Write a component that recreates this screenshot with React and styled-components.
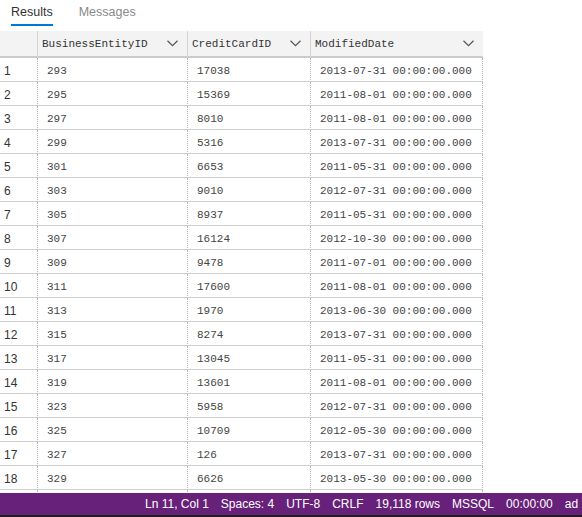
import React from "react"
import styled, { createGlobalStyle } from "styled-components"

const GlobalStyle = createGlobalStyle`
  html, body {
    margin: 0;
    padding: 0;
    background: #ffffff;
  }
`

const rows = [
  [1, 293, 17038, "2013-07-31 00:00:00.000"],
  [2, 295, 15369, "2011-08-01 00:00:00.000"],
  [3, 297, 8010, "2011-08-01 00:00:00.000"],
  [4, 299, 5316, "2013-07-31 00:00:00.000"],
  [5, 301, 6653, "2011-05-31 00:00:00.000"],
  [6, 303, 9010, "2012-07-31 00:00:00.000"],
  [7, 305, 8937, "2011-05-31 00:00:00.000"],
  [8, 307, 16124, "2012-10-30 00:00:00.000"],
  [9, 309, 9478, "2011-07-01 00:00:00.000"],
  [10, 311, 17600, "2011-08-01 00:00:00.000"],
  [11, 313, 1970, "2013-06-30 00:00:00.000"],
  [12, 315, 8274, "2013-07-31 00:00:00.000"],
  [13, 317, 13045, "2011-05-31 00:00:00.000"],
  [14, 319, 13601, "2011-08-01 00:00:00.000"],
  [15, 323, 5958, "2012-07-31 00:00:00.000"],
  [16, 325, 10709, "2012-05-30 00:00:00.000"],
  [17, 327, 126, "2013-07-31 00:00:00.000"],
  [18, 329, 6626, "2013-05-30 00:00:00.000"],
  // the next row only peeks out above the status bar
  ["", "", "", ""],
]

const columns = ["BusinessEntityID", "CreditCardID", "ModifiedDate"]
const statusItems = ["Ln 11, Col 1", "Spaces: 4", "UTF-8", "CRLF", "19,118 rows", "MSSQL", "00:00:00", "ad"]

const Page = styled.div`
  width: 582px;
  height: 517px;
  display: flex;
  flex-direction: column;
  overflow: hidden;
  font-family: "Liberation Sans", Arial, sans-serif;
`

const Tabs = styled.div`
  height: 31px;
  display: flex;
  align-items: flex-start;
  gap: 26px;
  padding-left: 11px;
  flex-shrink: 0;
`

const Tab = styled.div`
  height: 26px;
  box-sizing: border-box;
  padding-top: 4px;
  font-size: 12.5px;
  line-height: 16px;
  color: ${(p) => (p.$active ? "#333333" : "#8a8a8a")};
  border-bottom: 2px solid ${(p) => (p.$active ? "#0078d4" : "transparent")};
`

const GridArea = styled.div`
  flex: 1;
  overflow: hidden;
`

const Grid = styled.div`
  width: 483px;
  display: grid;
  grid-template-columns: 37px 150px 123px 173px;
`

const HeadCell = styled.div`
  height: 27px;
  box-sizing: border-box;
  background: #f3f3f3;
  border-bottom: 2px solid #cccccc;
  border-left: ${(p) => (p.$first ? "none" : "1px solid #d4d4d4")};
  display: flex;
  align-items: center;
  justify-content: space-between;
  padding: 0 9px 0 4px;
  font-family: "Liberation Mono", "Courier New", monospace;
  font-size: 11px;
  color: #333333;
`

const Cell = styled.div`
  height: 24px;
  box-sizing: border-box;
  padding: 4px 0 0 ${(p) => (p.$num ? "4px" : "9px")};
  line-height: 19px;
  border-bottom: 1px solid #cfcfcf;
  border-left: ${(p) => (p.$num ? "none" : "1px dotted #b8b8b8")};
  border-right: ${(p) => (p.$last ? "1px dotted #b8b8b8" : "none")};
  font-family: ${(p) => (p.$num ? `"Liberation Sans", Arial, sans-serif` : `"Liberation Mono", "Courier New", monospace`)};
  font-size: ${(p) => (p.$num ? "12px" : "11px")};
  color: ${(p) => (p.$num ? "#333333" : "#444444")};
  white-space: nowrap;
`

const StatusBar = styled.div`
  height: 22px;
  flex-shrink: 0;
  background: #68217a;
  display: flex;
  align-items: center;
  gap: 12px;
  padding-left: 145px;
  white-space: nowrap;
  overflow: hidden;
  font-size: 12px;
  color: #ffffff;
`

const StatusItem = styled.span`
  flex-shrink: 0;
`

const BottomEdge = styled.div`
  height: 2px;
  flex-shrink: 0;
  background: #1e1e1e;
`

const Chevron = () => (
  <svg width="11" height="7" viewBox="0 0 11 7">
    <path d="M0.5 0.8 L5.5 5.6 L10.5 0.8" fill="none" stroke="#555" strokeWidth="1.2" />
  </svg>
)

export default function App() {
  return (
    <Page>
      <GlobalStyle />
      <Tabs>
        <Tab $active>Results</Tab>
        <Tab>Messages</Tab>
      </Tabs>
      <GridArea>
        <Grid>
          <HeadCell $first />
          {columns.map((c) => (
            <HeadCell key={c}>
              <span>{c}</span>
              <Chevron />
            </HeadCell>
          ))}
          {rows.map((r, i) => (
            <React.Fragment key={i}>
              <Cell $num>{r[0]}</Cell>
              <Cell>{r[1]}</Cell>
              <Cell>{r[2]}</Cell>
              <Cell $last>{r[3]}</Cell>
            </React.Fragment>
          ))}
        </Grid>
      </GridArea>
      <StatusBar>
        {statusItems.map((s) => (
          <StatusItem key={s}>{s}</StatusItem>
        ))}
      </StatusBar>
      <BottomEdge />
    </Page>
  )
}
